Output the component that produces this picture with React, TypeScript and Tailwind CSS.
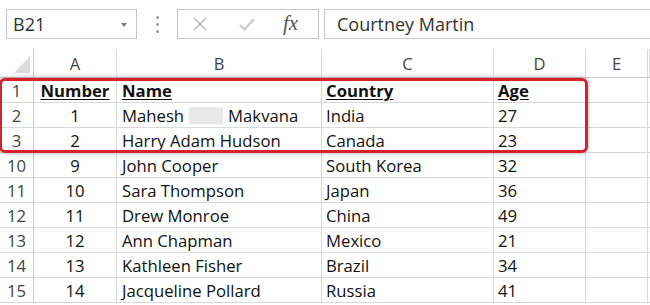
import React from "react";

type Row = {
  num: string;
  a: string;
  b: React.ReactNode;
  c: string;
  d: string;
  head?: boolean;
};

const rows: Row[] = [
  { num: "1", a: "Number", b: "Name", c: "Country", d: "Age", head: true },
  {
    num: "2",
    a: "1",
    b: (
      <span className="flex items-center">
        Mahesh
        <span className="mx-[5px] inline-block h-[17px] w-[34px] bg-[#e8e8e8]" />
        Makvana
      </span>
    ),
    c: "India",
    d: "27",
  },
  { num: "3", a: "2", b: "Harry Adam Hudson", c: "Canada", d: "23" },
  { num: "10", a: "9", b: "John Cooper", c: "South Korea", d: "32" },
  { num: "11", a: "10", b: "Sara Thompson", c: "Japan", d: "36" },
  { num: "12", a: "11", b: "Drew Monroe", c: "China", d: "49" },
  { num: "13", a: "12", b: "Ann Chapman", c: "Mexico", d: "21" },
  { num: "14", a: "13", b: "Kathleen Fisher", c: "Brazil", d: "34" },
  { num: "15", a: "14", b: "Jacqueline Pollard", c: "Russia", d: "41" },
];

const cols = "grid-cols-[34px_83px_205px_172px_92px_62px_1fr]";

function FormulaBar() {
  return (
    <div className="flex h-[30px] items-stretch pl-[6px]">
      <div className="relative flex w-[131px] items-center border border-[#c6c6c6] pl-[6px] text-[18px] text-[#333]">
        B21
        <span className="absolute right-[9px] top-[13px] h-0 w-0 border-x-[3.5px] border-t-[4px] border-x-transparent border-t-[#777]" />
      </div>
      <div className="flex w-[40px] flex-col items-center justify-center gap-[4px]">
        <span className="h-[3px] w-[3px] rounded-full bg-[#9a9a9a]" />
        <span className="h-[3px] w-[3px] rounded-full bg-[#9a9a9a]" />
        <span className="h-[3px] w-[3px] rounded-full bg-[#9a9a9a]" />
      </div>
      <div className="flex w-[142px] items-center border border-[#c6c6c6]">
        <svg className="ml-[15px]" width="14" height="14" viewBox="0 0 14 14">
          <path d="M1 1L13 13M13 1L1 13" stroke="#b5b5b5" strokeWidth="1.4" />
        </svg>
        <svg className="ml-[32px]" width="16" height="14" viewBox="0 0 16 14">
          <path d="M1 8L5.5 12.5L15 2" stroke="#cfcfcf" strokeWidth="2.6" fill="none" />
        </svg>
        <span className="ml-[28px] font-['Liberation_Serif',serif] text-[21px] italic text-[#555]">
          fx
        </span>
      </div>
      <div className="ml-[5px] flex flex-1 items-center border border-r-0 border-[#c6c6c6] pl-[12px] text-[18px] text-[#333]">
        Courtney Martin
      </div>
    </div>
  );
}

export default function App() {
  return (
    <div className="relative h-[305px] w-[650px] overflow-hidden bg-white pt-[9px] font-['Open_Sans',sans-serif] text-[#222]">
      <FormulaBar />

      <div className="mt-[10px]">
        {/* column headers */}
        <div className={`grid ${cols} h-[29px] border-b border-[#c8c8c8] text-[16.5px] text-[#444]`}>
          <div className="relative border-r border-[#c8c8c8]">
            <span className="absolute bottom-[4px] right-[3px] h-0 w-0 border-b-[17px] border-l-[16px] border-b-[#dcdcdc] border-l-transparent" />
          </div>
          {["A", "B", "C", "D", "E", ""].map((l, i) => (
            <div key={i} className="flex items-center justify-center border-r border-[#dadada] pt-[2px]">
              {l}
            </div>
          ))}
        </div>

        {rows.map((r) => (
          <div key={r.num} className={`grid ${cols} h-[25px] border-b border-[#d9d9d9] text-[16.7px]`}>
            <div className="flex items-center justify-center border-r border-[#c8c8c8] text-[#444]">
              {r.num}
            </div>
            <div className={`flex items-center justify-center border-r border-[#d9d9d9] text-[#111] ${r.head ? "font-bold underline underline-offset-2" : ""}`}>
              {r.a}
            </div>
            <div className={`flex items-center border-r border-[#d9d9d9] pl-[5px] text-[#111] ${r.head ? "font-bold underline underline-offset-2" : ""}`}>
              {r.b}
            </div>
            <div className={`flex items-center border-r border-[#d9d9d9] pl-[4px] text-[#111] ${r.head ? "font-bold underline underline-offset-2" : ""}`}>
              {r.c}
            </div>
            <div className={`flex items-center border-r border-[#d9d9d9] pl-[4px] text-[#111] ${r.head ? "font-bold underline underline-offset-2" : ""}`}>
              {r.d}
            </div>
            <div className="border-r border-[#d9d9d9]" />
            <div />
          </div>
        ))}
      </div>

      {/* highlight around rows 1-3 */}
      <div className="pointer-events-none absolute left-[-1px] top-[78px] h-[75px] w-[589px] rounded-[6px] border-[3px] border-[#d7222a] shadow-[0_0_4px_rgba(0,0,0,0.35)]" />
    </div>
  );
}
